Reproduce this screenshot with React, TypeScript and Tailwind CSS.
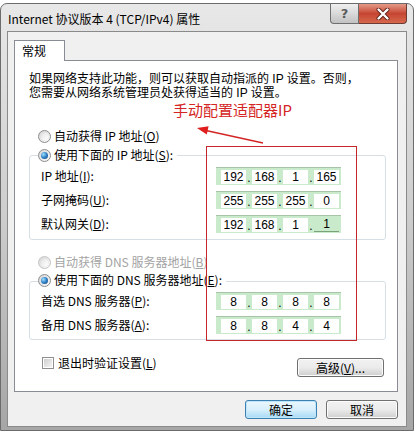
import React from 'react';

const cjk = "font-['Noto_Sans_CJK_SC','Noto_Sans',sans-serif]";

const Radio = ({ checked, disabled }: { checked?: boolean; disabled?: boolean }) => (
  <span
    className={`flex h-[13px] w-[13px] shrink-0 items-center justify-center rounded-full border ${
      disabled ? 'border-[#c4c4c4]' : 'border-[#8a8c8e]'
    } bg-linear-to-br from-[#d6d6d6] to-[#fbfbfb]`}
  >
    {checked ? (
      <span className="h-[7px] w-[7px] rounded-full bg-radial-[at_35%_35%] from-[#9ee0ff] via-[#2f7fc4] to-[#143f74]" />
    ) : (
      <span className="h-[7px] w-[7px] rounded-full bg-linear-to-br from-[#e4e4e4] to-[#ffffff]" />
    )}
  </span>
);

const Key = ({ k }: { k: string }) => (
  <>
    (<span className="underline">{k}</span>)
  </>
);

type Octets = string[];

const IpField = ({ values, lastGreen }: { values: Octets; lastGreen?: boolean }) => (
  <div className="flex h-[18px] w-[125px] items-center border-t border-[#a9c3a9] bg-[#c9ebcb] pl-[5px] font-['Liberation_Sans',sans-serif] text-[12px]">
    {values.map((v, i) => (
      <React.Fragment key={i}>
        {i > 0 && <span className="flex h-[14px] w-[6px] items-end justify-center leading-[12px]">.</span>}
        <span
          className={`flex h-[14px] w-[25px] items-center justify-center leading-[14px] ${
            i === 3 && lastGreen ? 'border-b border-[#7aa37a] bg-[#c9ebcb]' : 'bg-white'
          }`}
        >
          {v}
        </span>
      </React.Fragment>
    ))}
  </div>
);

const FieldRow = ({ label, values, lastGreen }: { label: React.ReactNode; values: Octets; lastGreen?: boolean }) => (
  <div className="flex h-[24px] items-center pl-[11px]">
    <span className="w-[175px] leading-[14px]">{label}</span>
    <IpField values={values} lastGreen={lastGreen} />
  </div>
);

const WinButton = ({ children, primary }: { children: React.ReactNode; primary?: boolean }) => (
  <button
    className={`flex h-[19px] w-[72px] items-center justify-center rounded-[3px] border text-[12px] leading-[14px] ${
      primary
        ? 'border-[#3c7fb1] bg-linear-to-b from-[#eaf6fd] via-[#d9f0fc] to-[#a7d9f5] shadow-[inset_0_0_0_1px_#bfe6fa]'
        : 'border-[#707070] bg-linear-to-b from-[#f2f2f2] via-[#ebebeb] to-[#cfcfcf] shadow-[inset_0_0_0_1px_#fcfcfc]'
    }`}
  >
    {children}
  </button>
);

export default function App() {
  return (
    <div className={`relative h-[431px] w-[414px] overflow-hidden bg-white pt-[3px] text-[12px] text-black ${cjk}`}>
      <div className="flex h-[428px] flex-col rounded-t-[7px] border border-[#6c6c6c] bg-linear-to-b from-[#e8e8e8] via-[#cdcdcd] to-[#a6a6a6] px-[6px] pb-[3px]">
        {/* title bar */}
        <div className="flex h-[27px] items-start justify-between">
          <span className="mt-[8px] pl-[1px] leading-[14px]">Internet 协议版本 4 (TCP/IPv4) 属性</span>
          <div className="flex">
            <div className="flex h-[20px] w-[29px] items-center justify-center rounded-bl-[4px] border border-t-0 border-[#6e6e6e] bg-linear-to-b from-[#f0f0f0] via-[#d9d9d9] to-[#c2c2c2] font-['DejaVu_Sans',sans-serif] text-[13px] font-bold leading-none text-[#5c5c5c]">
              ?
            </div>
            <div className="flex h-[20px] w-[48px] items-center justify-center rounded-br-[4px] border border-l-0 border-t-0 border-[#6e3a34] bg-linear-to-b from-[#e49a8a] via-[#c54531] to-[#d6684e]">
              <svg width="14" height="12" viewBox="0 0 14 12">
                <path d="M2.5 1.5 L11.5 10.5 M11.5 1.5 L2.5 10.5" stroke="#5a2018" strokeWidth="4" strokeLinecap="round" />
                <path d="M2.5 1.5 L11.5 10.5 M11.5 1.5 L2.5 10.5" stroke="#ffffff" strokeWidth="2.4" strokeLinecap="round" />
              </svg>
            </div>
          </div>
        </div>

        {/* client area */}
        <div className="flex flex-1 flex-col border border-[#8a8a8a] bg-[#f0f0f0]">
          <div className="pl-[6px] pt-[8px]">
            <div className="relative z-10 -mb-px flex h-[21px] w-[51px] items-center border border-b-0 border-[#898c95] bg-white pl-[7px] leading-[14px]">
              常规
            </div>
          </div>

          <div className="ml-[6px] mr-[8px] flex h-[332px] flex-col border border-[#898c95] bg-white">
            <div className="pl-[14px] pt-[11px] font-['Liberation_Sans','Noto_Sans_CJK_SC',sans-serif] leading-[14px]">
              <div>如果网络支持此功能，则可以获取自动指派的 IP 设置。否则，</div>
              <div>您需要从网络系统管理员处获得适当的 IP 设置。</div>
            </div>

            <div className="mt-[1px] pl-[158px] text-[15px] leading-[18px] text-[#d42424]">手动配置适配器IP</div>

            <div className="mt-[8px] flex h-[18px] items-center gap-[3px] pl-[23px]">
              <Radio />
              <span>
                自动获得 IP 地址<Key k="O" />
              </span>
            </div>

            <div className="ml-[14px] mr-[11px] mt-[10px] rounded-[3px] border border-[#d5dfe5] pb-[3px]">
              <div className="-mt-[10px] ml-[8px] flex h-[18px] w-fit items-center gap-[3px] bg-white pr-[4px]">
                <Radio checked />
                <span>
                  使用下面的 IP 地址<Key k="S" />:
                </span>
              </div>
              <FieldRow label={<>IP 地址<Key k="I" />:</>} values={['192', '168', '1', '165']} />
              <FieldRow label={<>子网掩码<Key k="U" />:</>} values={['255', '255', '255', '0']} />
              <FieldRow label={<>默认网关<Key k="D" />:</>} values={['192', '168', '1', '1']} lastGreen />
            </div>

            <div className="mt-[13px] flex h-[18px] items-center gap-[3px] pl-[23px] text-[#a3a3a3]">
              <Radio disabled />
              <span>
                自动获得 DNS 服务器地址<Key k="B" />
              </span>
            </div>

            <div className="ml-[14px] mr-[11px] mt-[10px] rounded-[3px] border border-[#d5dfe5] pb-[2px]">
              <div className="-mt-[11px] ml-[8px] flex h-[18px] w-fit items-center gap-[3px] bg-white pr-[4px]">
                <Radio checked />
                <span>
                  使用下面的 DNS 服务器地址<Key k="E" />:
                </span>
              </div>
              <FieldRow label={<>首选 DNS 服务器<Key k="P" />:</>} values={['8', '8', '8', '8']} />
              <FieldRow label={<>备用 DNS 服务器<Key k="A" />:</>} values={['8', '8', '4', '4']} />
            </div>

            <div className="mt-[17px] flex items-start justify-between pl-[27px] pr-[13px]">
              <div className="flex h-[12px] items-center gap-[4px]">
                <span className="flex h-[12px] w-[12px] items-center justify-center border border-[#8f8f8f] bg-white">
                  <span className="h-[8px] w-[8px] bg-linear-to-br from-[#cfcfcf] to-[#f4f4f4]" />
                </span>
                <span className="leading-[12px]">
                  退出时验证设置<Key k="L" />
                </span>
              </div>
              <div className="mt-[1px]">
                <button className="flex h-[19px] w-[87px] items-center justify-center rounded-[3px] border border-[#707070] bg-linear-to-b from-[#f2f2f2] via-[#ebebeb] to-[#cfcfcf] text-[12px] leading-[14px] shadow-[inset_0_0_0_1px_#fcfcfc]">
                  高级<Key k="V" />...
                </button>
              </div>
            </div>
          </div>

          <div className="mr-[8px] mt-[8px] flex justify-end gap-[9px]">
            <WinButton primary>确定</WinButton>
            <WinButton>取消</WinButton>
          </div>
        </div>
      </div>

      {/* annotation overlays */}
      <div className="absolute left-[206px] top-[146px] h-[195px] w-[151px] border border-[#c4262b]" />
      <svg className="absolute left-[190px] top-[120px]" width="80" height="30" viewBox="0 0 80 30">
        <line x1="73" y1="23" x2="16" y2="10.5" stroke="#d42424" strokeWidth="1.3" />
        <polygon points="7,8 18.6,6.2 16.8,14.6" fill="#e01e1e" />
      </svg>
    </div>
  );
}
